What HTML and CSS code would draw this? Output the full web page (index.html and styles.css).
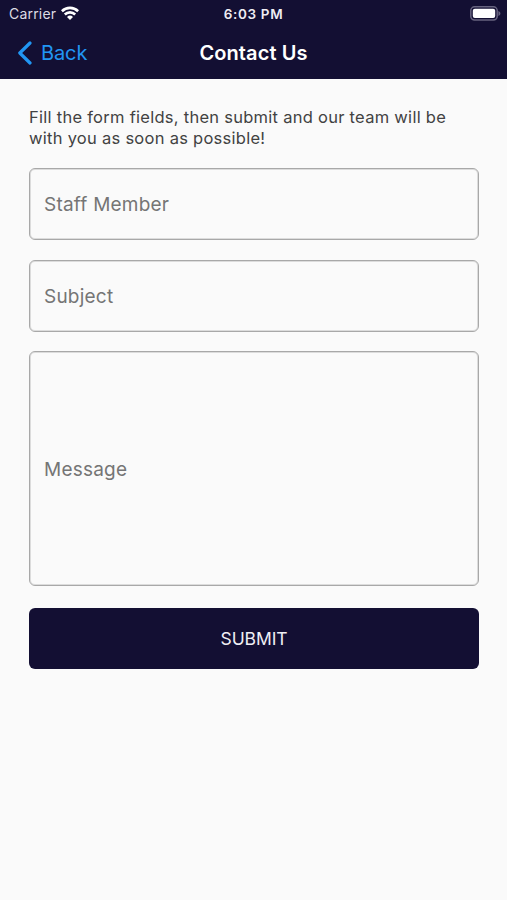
FILE: index.html
```
<!DOCTYPE html>
<html lang="en">
<head>
    <meta charset="UTF-8">
    <meta name="viewport" content="width=device-width, initial-scale=1.0">
    <title>Contact Us</title>
    <link rel="stylesheet" href="styles.css">
</head>
<body>
    <header class="header">
        <div class="status-bar">
            <div class="carrier">
                <span>Carrier</span>
                <svg class="wifi" width="18" height="14" viewBox="0 0 18 14" fill="none" stroke="#fff" stroke-width="2.6">
                    <path d="M0.9 5.2a11.6 11.6 0 0 1 16.2 0"/>
                    <path d="M3.8 8.5a7.4 7.4 0 0 1 10.4 0"/>
                    <path d="M9 13.9L6 10.9a4.3 4.3 0 0 1 6 0z" fill="#fff" stroke="none"/>
                </svg>
            </div>
            <span class="time">6:03 PM</span>
            <svg class="battery" width="31" height="15" viewBox="0 0 31 15">
                <rect x="0.8" y="0.8" width="26.4" height="13.2" rx="3.8" fill="none" stroke="#67637f" stroke-width="1.5"/>
                <rect x="2.8" y="2.8" width="22.4" height="9.2" rx="2" fill="#fff"/>
                <path d="M28.4 5v5c1.2-.4 2-1.3 2-2.5s-.8-2.1-2-2.5z" fill="#67637f"/>
            </svg>
        </div>
        <div class="nav-bar">
            <a class="back" href="#">
                <svg width="16" height="24" viewBox="0 0 16 24" fill="none" stroke="#2196f3" stroke-width="3.2" stroke-linecap="round" stroke-linejoin="round">
                    <path d="M13 2L2.8 12L13 22"/>
                </svg>
                <span>Back</span>
            </a>
            <h1>Contact Us</h1>
        </div>
    </header>
    <main class="container">
        <p class="intro">Fill the form fields, then submit and our team will be with you as soon as possible!</p>
        <form onsubmit="event.preventDefault();">
            <input type="text" id="staff" placeholder="Staff Member">
            <input type="text" id="subject" placeholder="Subject">
            <textarea id="message" placeholder="Message"></textarea>
            <button type="submit">SUBMIT</button>
        </form>
    </main>
</body>
</html>
```
FILE: styles.css
```
* {
    box-sizing: border-box;
}

body {
    font-family: Inter, "Liberation Sans", sans-serif;
    background: #fafafa;
    color: #424242;
    margin: 0;
    min-height: 100vh;
}

.header {
    height: 79px;
    background: #130f33;
    color: #fff;
}

.status-bar {
    display: grid;
    grid-template-columns: 1fr auto 1fr;
    align-items: center;
    height: 27px;
    padding: 0 6px 0 9px;
    font-size: 14px;
}

.carrier {
    display: flex;
    align-items: center;
    gap: 6px;
    color: #dddce4;
    letter-spacing: 0.2px;
}

.wifi {
    margin: -2px 0 0 -1px;
}

.time {
    margin-right: 3px;
    font-weight: 600;
    font-size: 13.5px;
    letter-spacing: 0.65px;
    color: #eeedf3;
}

.battery {
    justify-self: end;
}

.nav-bar {
    display: grid;
    grid-template-columns: 1fr auto 1fr;
    align-items: center;
    height: 51px;
    padding: 0 17px;
}

.back {
    display: flex;
    align-items: center;
    gap: 8px;
    color: #2196f3;
    font-size: 20px;
    letter-spacing: -0.1px;
    text-decoration: none;
}

h1 {
    margin: 0;
    font-size: 20px;
    font-weight: 600;
    letter-spacing: 0.1px;
}

.container {
    padding: 28px 28px 0 29px;
}

.intro {
    margin: 0 0 19px;
    font-size: 16.5px;
    line-height: 21px;
    letter-spacing: 0.27px;
}

form {
    display: flex;
    flex-direction: column;
}

input,
textarea {
    display: block;
    width: 100%;
    height: 72px;
    margin: 0 0 20px;
    padding: 0 14px;
    font-family: inherit;
    font-size: 19px;
    letter-spacing: 0.22px;
    color: #424242;
    background: transparent;
    border: 1px solid #a8a8a8;
    border-radius: 6px;
    box-shadow: inset 0 0 0 1px #dcdcdc;
    outline: none;
}

#subject {
    margin-bottom: 19px;
}

textarea {
    height: 235px;
    margin-bottom: 22px;
    padding-top: 106px;
    line-height: 23px;
    resize: none;
}

input::placeholder,
textarea::placeholder {
    color: #757575;
    opacity: 1;
}

button {
    height: 61px;
    padding: 0;
    font-family: inherit;
    font-size: 17.5px;
    letter-spacing: -0.1px;
    color: #f0eff5;
    background: #130f33;
    border: none;
    border-radius: 6px;
    cursor: pointer;
}
```
